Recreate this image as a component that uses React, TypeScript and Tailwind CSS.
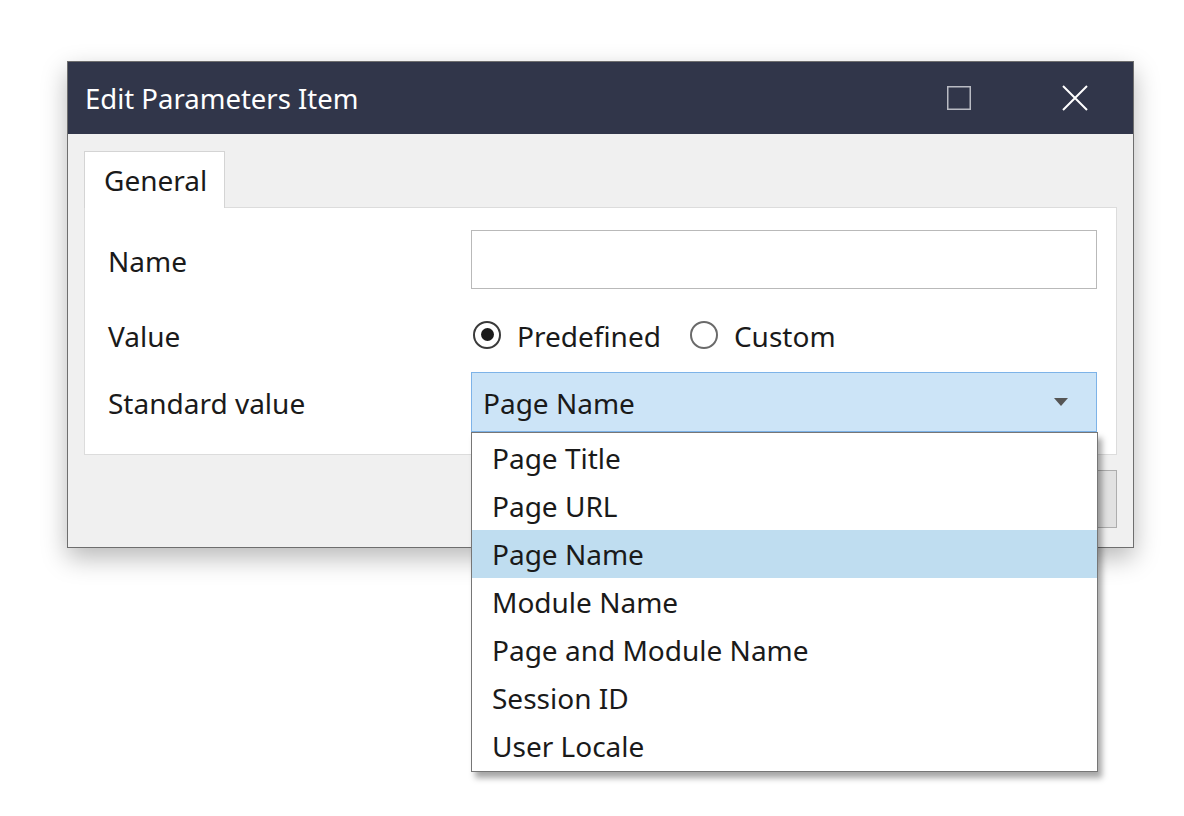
const FONT = { fontFamily: '"Noto Sans", "Open Sans", sans-serif' };

const OPTIONS = [
  "Page Title",
  "Page URL",
  "Page Name",
  "Module Name",
  "Page and Module Name",
  "Session ID",
  "User Locale",
];

function Radio({ checked, label }: { checked?: boolean; label: string }) {
  return (
    <label className="flex items-center gap-[16px]">
      <span
        className={`w-[28px] h-[28px] rounded-full border-2 flex items-center justify-center bg-white ${
          checked ? "border-[#3a3a3a]" : "border-[#6a6a6a]"
        }`}
      >
        {checked && <span className="w-[13px] h-[13px] rounded-full bg-[#1b1b1b]" />}
      </span>
      <span className="pt-[2px]">{label}</span>
    </label>
  );
}

export default function App() {
  const selected = "Page Name";

  return (
    <div className="w-[1184px] h-[816px] bg-white pt-[61px] pl-[67px] relative text-[#1a1a1a]" style={FONT}>
      {/* dialog window */}
      <div className="w-[1067px] h-[487px] border border-[#6e6e6e] bg-[#f0f0f0] shadow-[0_10px_24px_rgba(0,0,0,0.28)] flex flex-col">
        <div className="h-[72px] bg-[#31364a] flex items-center pl-[17px] pr-[45px] text-white">
          <span className="text-[27.5px] pt-[1px]">Edit Parameters Item</span>
          <div className="ml-auto flex items-center gap-[91px]">
            <svg width="24" height="24" viewBox="0 0 24 24">
              <rect x="0.75" y="0.75" width="22.5" height="22.5" fill="none" stroke="#b9bbc3" strokeWidth="1.5" />
            </svg>
            <svg width="26" height="26" viewBox="0 0 26 26">
              <path d="M1 1 L25 25 M25 1 L1 25" stroke="#ffffff" strokeWidth="2" />
            </svg>
          </div>
        </div>

        <div className="px-[16px] pt-[17px] flex flex-col">
          {/* tab */}
          <div className="flex">
            <div className="h-[57px] w-[141px] bg-white border border-b-0 border-[#d4d4d4] flex items-center pl-[19px] text-[28px] -mb-px relative z-10">
              General
            </div>
          </div>
          <div className="h-[248px] w-[1033px] bg-white border border-[#dcdcdc] pt-[22px] pl-[23px] pr-[19px] text-[28px]">
            <div className="flex items-center h-[59px]">
              <span className="w-[363px] pt-[3px]">Name</span>
              <div className="flex-1 h-[59px] border border-[#b9b9b9] bg-white" />
            </div>
            <div className="flex items-center h-[83px] pt-[8px]">
              <span className="w-[363px] pt-[2px]">Value</span>
              <div className="flex items-center gap-[29px] pl-[2px]">
                <Radio checked label="Predefined" />
                <Radio label="Custom" />
              </div>
            </div>
            <div className="flex items-center h-[60px]">
              <span className="w-[363px] pt-[2px]">Standard value</span>
              <div className="flex-1 h-[60px] border border-[#7db3e8] bg-[#cce4f7] flex items-center pl-[11px] pr-[27px]">
                <span className="pt-[2px]">{selected}</span>
                <svg className="ml-auto" width="16" height="10" viewBox="0 0 16 10">
                  <path d="M1 1 L15 1 L8 9 Z" fill="#555" />
                </svg>
              </div>
            </div>
          </div>

          <div className="flex justify-end mt-[15px]">
            <div className="h-[58px] w-[150px] border border-[#adadad] bg-[#e1e1e1]" />
          </div>
        </div>
      </div>

      {/* open dropdown list */}
      <div className="absolute left-[471px] top-[432px] w-[627px] h-[340px] bg-white border border-[#767676] shadow-[4px_6px_6px_rgba(0,0,0,0.35)] pt-px text-[28px]">
        {OPTIONS.map((opt) => (
          <div
            key={opt}
            className={`h-[48px] flex items-center pl-[20px] ${opt === selected ? "bg-[#bfddf0]" : ""}`}
          >
            {opt}
          </div>
        ))}
      </div>
    </div>
  );
}
